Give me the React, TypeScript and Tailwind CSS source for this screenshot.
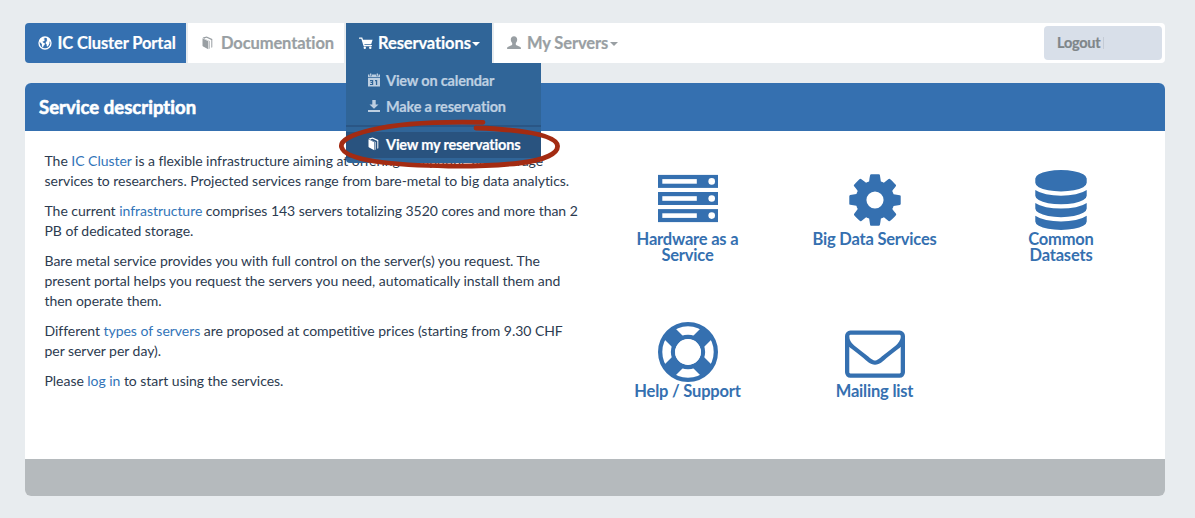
import type { ReactNode } from "react";

function Globe() {
  return (
    <svg viewBox="0 0 14 14" className="size-3.5 shrink-0">
      <circle cx="7" cy="7" r="6" fill="none" stroke="currentColor" strokeWidth="1.3" />
      <path fill="currentColor" d="M1 5 3 2.2 6 1l.8 1.2-1.4.8 1.5.7-.7 1.2-1.8.8 1 1 1.6.7-.5 1.5-1 .9-.5 2-1.1-1.6-.1-2.2L2.3 6.500zM8.300 1.300l2 .5 1.700 2 .5 1.700-1.200.2.3 1.400-.9 2-.9 1.500-1-.3-.2-2-1-.9.3-1.700 1.500-.8-.9-.8.7-.9z" />
    </svg>
  );
}

function Book() {
  return (
    <svg viewBox="0 0 14 14" className="size-3.5 shrink-0" fill="currentColor">
      <path d="M1.500 2.300 7.300 5.300V13.200L2.100 10.400Q1.500 10 1.500 9.400z" />
      <path d="M1.700 2Q2 1.500 2.600 1.300L5.700.5l5.600 2.600v8.100l-1 .5V3.900L5.500 1.700l-2.300.7 5.400 2.500v7.600l-.7.4V5.100z" />
    </svg>
  );
}

function Cart() {
  return (
    <svg viewBox="0 0 14 14" className="size-3.5 shrink-0">
      <path d="M.6 2.100h2.200l2.300 7.500h7.300" fill="none" stroke="currentColor" strokeWidth="1.300" strokeLinecap="round" />
      <path d="M3.400 3.800h10.200l-1.400 4.500H4.800z" fill="currentColor" />
      <circle cx="5.800" cy="11.800" r="1.200" fill="currentColor" />
      <circle cx="11.300" cy="11.800" r="1.200" fill="currentColor" />
    </svg>
  );
}

function Person() {
  return (
    <svg viewBox="0 0 14 14" className="size-3.5 shrink-0" fill="currentColor">
      <path d="M7 .3c2 0 3.200 1.300 3.200 3.200 0 1.500-.6 2.700-1.400 3.500v1.400c0 .4.300.7.7.9l3.300 1.400c.7.300 1.100.7 1.100 1.300v1H.1v-1c0-.6.4-1 1.100-1.300l3.300-1.400c.4-.2.7-.5.7-.9V7c-.8-.8-1.400-2-1.400-3.500C3.800 1.600 5 .3 7 .3z" />
    </svg>
  );
}

function Calendar() {
  return (
    <svg viewBox="0 0 14 14" className="size-3.5 shrink-0" fill="currentColor">
      <path fillRule="evenodd" d="M1 5h12v8.500H1zM3 7v1.200h2v.8H3.600v1H5v.9H3V12h3.200V7zm5 0v1.200h.9V12h1.300V7z" />
      <path d="M1 1.500h1.500v1.800h2.300V1.500h4.400v1.800h2.300V1.500H13v2.700H1zM3 .5h1.300v2.200H3zM9.700.5H11v2.200H9.700z" />
    </svg>
  );
}

function Save() {
  return (
    <svg viewBox="0 0 14 14" className="size-3.5 shrink-0" fill="currentColor">
      <path d="M5.300 1h3.400v4.500h2.800L7 9.800 2.500 5.500h2.800zM1 11h12v1.900H1z" />
    </svg>
  );
}

function Server() {
  return (
    <svg viewBox="0 0 60 60" className="size-15" fill="currentColor">
      {[4.900, 22, 39.100].map((y) => (
        <g key={y}>
          <rect x="0" y={y} width="60" height="13" />
          <rect x="4.300" y={y + 4.200} width="34.500" height="4.600" fill="white" />
          <circle cx="53.700" cy={y + 6.500} r="3.300" fill="white" />
        </g>
      ))}
    </svg>
  );
}

function Cog() {
  return (
    <svg viewBox="0 0 1792 1792" className="size-15" fill="currentColor">
      <path d="M1152 896q0-106-75-181t-181-75-181 75-75 181 75 181 181 75 181-75 75-181zm512-109v222q0 12-8 23t-20 13l-185 28q-19 54-39 91 35 50 107 138 10 12 10 25t-9 23q-27 37-99 108t-94 71q-12 0-26-9l-138-108q-44 23-91 38-16 136-29 186-7 28-36 28h-222q-14 0-24.500-8.500t-11.500-21.500l-28-184q-49-16-90-37l-141 107q-10 9-25 9-14 0-25-11-126-114-165-168-7-10-7-23 0-12 8-23 15-21 51-66.500t54-70.500q-27-50-41-99l-183-27q-13-2-21-12.500t-8-23.500v-222q0-12 8-23t19-13l186-28q14-46 39-92-40-57-107-138-10-12-10-24 0-10 9-23 26-36 98.500-107.500t94.500-71.500q13 0 26 10l138 107q44-23 91-38 16-136 29-186 7-28 36-28h222q14 0 24.500 8.500t11.500 21.500l28 184q49 16 90 37l142-107q9-9 24-9 13 0 25 10 129 119 165 170 7 8 7 22 0 12-8 23-15 21-51 66.500t-54 70.500q26 50 41 98l183 28q13 2 21 12.500t8 23.500z" />
    </svg>
  );
}

function Database() {
  return (
    <svg viewBox="0 0 1792 1792" className="size-15" fill="currentColor">
      <path d="M896 768q237 0 443-43t325-127v170q0 69-103 128t-280 93.500-385 34.500-385-34.500-280-93.500-103-128v-170q119 84 325 127t443 43zm0 768q237 0 443-43t325-127v170q0 69-103 128t-280 93.500-385 34.500-385-34.500-280-93.500-103-128v-170q119 84 325 127t443 43zm0-384q237 0 443-43t325-127v170q0 69-103 128t-280 93.500-385 34.500-385-34.500-280-93.500-103-128v-170q119 84 325 127t443 43zm0-1152q208 0 385 34.500t280 93.500 103 128v128q0 69-103 128t-280 93.500-385 34.500-385-34.500-280-93.500-103-128v-128q0-69 103-128t280-93.500 385-34.500z" />
    </svg>
  );
}

function LifeRing() {
  return (
    <svg viewBox="0 0 60 60" className="size-15" fill="none" stroke="currentColor">
      <circle cx="30" cy="30" r="27.850" strokeWidth="4.300" />
      <circle cx="30" cy="30" r="15" strokeWidth="4.300" />
      <path d="M10.500 10.500 19.500 19.500M49.500 10.500 40.500 19.500M10.500 49.500 19.500 40.500M49.500 49.500 40.500 40.500" strokeWidth="15.500" />
      <circle cx="30" cy="30" r="12.900" fill="white" stroke="none" />
    </svg>
  );
}

function Envelope() {
  return (
    <svg viewBox="0 0 1792 1792" className="size-15" fill="currentColor">
      <path d="M1664 1504v-768q-32 36-69 66-268 206-426 338-51 43-83 67t-86.500 48.500-102.500 24.500h-2q-48 0-102.500-24.500t-86.500-48.500-83-67q-158-132-426-338-37-30-69-66v768q0 13 9.500 22.500t22.500 9.500h1472q13 0 22.500-9.500t9.500-22.500zm0-1051v-24.500l-.5-13-3-12.500-5.500-9-9-7.500-14-2.500h-1472q-13 0-22.500 9.500t-9.500 22.500q0 168 147 284 193 152 401 317 6 5 35 29.500t46 37.500 44.500 31.500 50.500 27.500 43 9h2q20 0 43-9t50.500-27.500 44.500-31.500 46-37.500 35-29.500q208-165 401-317 54-43 100.500-115.500t46.500-131.500zm128-37v1088q0 66-47 113t-113 47h-1472q-66 0-113-47t-47-113v-1088q0-66 47-113t113-47h1472q66 0 113 47t47 113z" />
    </svg>
  );
}

function Caret() {
  return (
    <svg viewBox="0 0 8 4" className="mt-0.5 h-1 w-2 shrink-0" fill="currentColor">
      <path d="M0 0h8L4 4z" />
    </svg>
  );
}

function MenuItem({ icon, label, active }: { icon: ReactNode; label: string; active?: boolean }) {
  return (
    <a
      className={
        active
          ? "flex h-[26px] items-center gap-[5px] bg-[#29537f] pl-[21px] text-white"
          : "flex h-[26px] items-center gap-[5px] pl-[21px] text-[#bdcfe1]"
      }
    >
      <span className="pb-0.5">{icon}</span>
      <span>{label}</span>
    </a>
  );
}

function Tile({ icon, label }: { icon: ReactNode; label: string }) {
  return (
    <a className="flex w-[187px] flex-col items-center text-center text-[16.500px] leading-4 font-bold tracking-[-0.2px] text-[#3570b0]">
      {icon}
      <span className="mt-px w-[130px]">{label}</span>
    </a>
  );
}

function Link({ children }: { children: ReactNode }) {
  return <a className="text-[#3274b8]">{children}</a>;
}

export default function App() {
  return (
    <div className="h-[518px] overflow-hidden bg-[#e8ecef] px-[25px] pt-[23px] font-['Lato',sans-serif] text-[#2c3b50]">
      <nav className="mr-[5px] flex h-10 gap-0.5 text-[16.500px] font-bold tracking-[-0.12px] [-webkit-text-stroke:0.2px_currentColor]">
        <a className="flex w-[161px] items-center gap-1.5 rounded-l bg-[#3570b0] pl-[12.500px] whitespace-nowrap text-white">
          <Globe />
          <span>IC Cluster Portal</span>
        </a>
        <a className="flex w-[156px] items-center gap-1.5 bg-white pl-[13px] whitespace-nowrap text-[#999fa3]">
          <Book />
          <span>Documentation</span>
        </a>
        <div className="relative z-10 w-[146px] text-white">
          <a className="flex h-10 items-center bg-[#306598] pl-[13px] whitespace-nowrap">
            <Cart />
            <span className="ml-[5px]">Reservations</span>
            <span className="ml-[1.500px]"><Caret /></span>
          </a>
          <div className="absolute top-10 left-0 h-[100px] w-[195px] rounded-b bg-[#306598] pt-[5px] text-[14.500px] tracking-[-0.19px] whitespace-nowrap">
            <MenuItem icon={<Calendar />} label="View on calendar" />
            <MenuItem icon={<Save />} label="Make a reservation" />
            <div className="mt-[5px] mb-[5px] h-0.5 bg-[#2a5685]" />
            <MenuItem icon={<Book />} label="View my reservations" active />
          </div>
          <svg className="pointer-events-none absolute top-[92px] -left-[10px] h-[60px] w-[230px]" viewBox="336 115 230 60" fill="none">
            <path d="M483 122.300C445 121.500 399 123 371 130C350 135 340 141 341.500 147C343 153 352 158 376 161.500C415 167 482 167.500 520 163C546 160 558 153 557.500 146C557 137 535 130 476 128" stroke="#a32b12" strokeWidth="4.800" strokeLinecap="round" />
          </svg>
        </div>
        <div className="flex flex-1 items-center justify-between rounded-r bg-white pr-[3px] pl-[13px]">
          <a className="flex items-center whitespace-nowrap text-[#999fa3]">
            <Person />
            <span className="ml-1.5">My Servers</span>
            <span className="ml-[1.500px]"><Caret /></span>
          </a>
          <a className="flex h-[34px] w-[118px] items-center gap-[3px] rounded bg-[#d8dfe9] pl-[13px] text-[14.500px] tracking-[-0.25px] text-[#7f8689]">
            <span>Logout</span>
            <span className="h-3 w-px bg-[#c4cbd5]" />
          </a>
        </div>
      </nav>

      <section className="mt-5 mr-[5px] overflow-hidden rounded-md bg-white">
        <h1 className="flex h-12 items-center bg-[#3570b0] pt-0.5 pl-3.5 text-[18.500px] font-bold tracking-[0.03px] text-white [-webkit-text-stroke:0.6px_currentColor]">
          Service description
        </h1>
        <div className="flex h-[328px]">
          <div className="flex w-[569px] flex-col gap-2.5 pt-5 pl-[19.500px] text-[14px] leading-5 tracking-[-0.034px] whitespace-nowrap">
            <p>
              The <Link>IC Cluster</Link> is a flexible infrastructure aiming at offering computing and storage<br />
              services to researchers. Projected services range from bare-metal to big data analytics.
            </p>
            <p>
              The current <Link>infrastructure</Link> comprises 143 servers totalizing 3520 cores and more than 2<br />
              PB of dedicated storage.
            </p>
            <p>
              Bare metal service provides you with full control on the server(s) you request. The<br />
              present portal helps you request the servers you need, automatically install them and<br />
              then operate them.
            </p>
            <p>
              Different <Link>types of servers</Link> are proposed at competitive prices (starting from 9.30 CHF<br />
              per server per day).
            </p>
            <p>
              Please <Link>log in</Link> to start using the services.
            </p>
          </div>
          <div className="grid grid-cols-[187px_186.500px_187px] content-start gap-y-[59px] pt-[39px]">
            <Tile icon={<Server />} label="Hardware as a Service" />
            <Tile icon={<Cog />} label="Big Data Services" />
            <Tile icon={<Database />} label="Common Datasets" />
            <Tile icon={<LifeRing />} label="Help / Support" />
            <Tile icon={<Envelope />} label="Mailing list" />
          </div>
        </div>
        <footer className="h-[37px] bg-[#b5babd]" />
      </section>
    </div>
  );
}
